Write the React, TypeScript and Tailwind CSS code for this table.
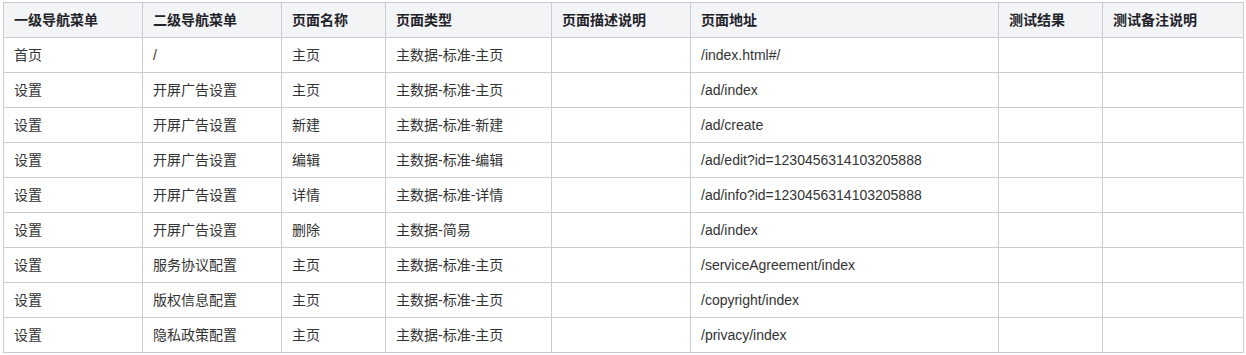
import React from 'react';

const headers = ['一级导航菜单', '二级导航菜单', '页面名称', '页面类型', '页面描述说明', '页面地址', '测试结果', '测试备注说明'];
const widths = ['w-[139px]', 'w-[139px]', 'w-[104px]', 'w-[166px]', 'w-[139px]', 'w-[308px]', 'w-[104px]', 'w-[141px]'];

const rows = [
  ['首页', '/', '主页', '主数据-标准-主页', '', '/index.html#/', '', ''],
  ['设置', '开屏广告设置', '主页', '主数据-标准-主页', '', '/ad/index', '', ''],
  ['设置', '开屏广告设置', '新建', '主数据-标准-新建', '', '/ad/create', '', ''],
  ['设置', '开屏广告设置', '编辑', '主数据-标准-编辑', '', '/ad/edit?id=1230456314103205888', '', ''],
  ['设置', '开屏广告设置', '详情', '主数据-标准-详情', '', '/ad/info?id=1230456314103205888', '', ''],
  ['设置', '开屏广告设置', '删除', '主数据-简易', '', '/ad/index', '', ''],
  ['设置', '服务协议配置', '主页', '主数据-标准-主页', '', '/serviceAgreement/index', '', ''],
  ['设置', '版权信息配置', '主页', '主数据-标准-主页', '', '/copyright/index', '', ''],
  ['设置', '隐私政策配置', '主页', '主数据-标准-主页', '', '/privacy/index', '', ''],
];

export default function App() {
  return (
    <div
      className="bg-white min-h-screen pl-[3px] pt-[2px] text-[14px] text-[#333]"
      style={{ fontFamily: '"Liberation Sans", "Noto Sans CJK SC", sans-serif' }}
    >
      <table className="table-fixed border-collapse w-[1241px]">
        <colgroup>
          {widths.map((w, i) => (
            <col key={i} className={w} />
          ))}
        </colgroup>
        <thead>
          <tr className="bg-[#f3f4f6]">
            {headers.map((h) => (
              <th key={h} className="h-[35px] border border-[#c9ccd3] px-[10px] text-left font-bold text-[#1f2329] leading-none">
                {h}
              </th>
            ))}
          </tr>
        </thead>
        <tbody>
          {rows.map((r, i) => (
            <tr key={i}>
              {r.map((c, j) => (
                <td key={j} className="h-[35px] border border-[#c9ccd3] px-[10px] leading-none whitespace-nowrap">
                  {c}
                </td>
              ))}
            </tr>
          ))}
        </tbody>
      </table>
    </div>
  );
}
